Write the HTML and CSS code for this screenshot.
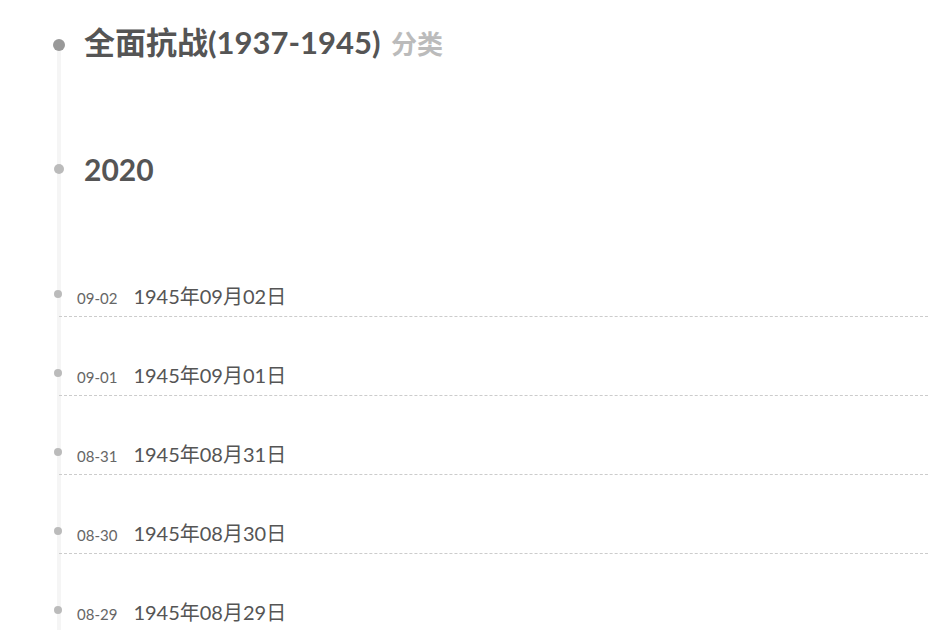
FILE: index.html
```html
<!DOCTYPE html>
<html lang="zh-CN">
<head>
<meta charset="utf-8">
<title>全面抗战(1937-1945) 分类</title>
<link rel="stylesheet" href="styles.css">
</head>
<body>
<div class="posts-collapse">
  <div class="collection-title">
    <h1>全面抗战(1937-1945) <small>分类</small></h1>
  </div>
  <div class="collection-year">
    <h2>2020</h2>
  </div>
  <article class="post">
    <time>09-02</time><a class="post-title" href="#">1945年09月02日</a>
  </article>
  <article class="post">
    <time>09-01</time><a class="post-title" href="#">1945年09月01日</a>
  </article>
  <article class="post">
    <time>08-31</time><a class="post-title" href="#">1945年08月31日</a>
  </article>
  <article class="post">
    <time>08-30</time><a class="post-title" href="#">1945年08月30日</a>
  </article>
  <article class="post">
    <time>08-29</time><a class="post-title" href="#">1945年08月29日</a>
  </article>
</div>
</body>
</html>
```

FILE: styles.css
```css
html, body {
  margin: 0;
  padding: 0;
  background: #fff;
}

body {
  font-family: Lato, "Noto Sans CJK SC", sans-serif;
  color: #555;
  overflow: hidden;
}

.posts-collapse {
  position: relative;
  margin-left: 59px;
  padding-top: 21px;
}

/* vertical timeline rail */
.posts-collapse::before {
  content: "";
  position: absolute;
  left: -2px;
  top: 50px;
  bottom: 0;
  width: 4px;
  background: #f5f5f5;
}

.collection-title,
.collection-year {
  position: relative;
  padding-left: 25px;
}

.collection-title h1 {
  margin: 0;
  font-size: 31px;
  font-weight: 700;
  line-height: 42px;
  color: #555;
}

.collection-title small {
  margin-left: 3px;
  font-size: 26px;
  color: #bbb;
}

.collection-title::before {
  content: "";
  position: absolute;
  left: -6px;
  top: 18px;
  width: 12px;
  height: 12px;
  border-radius: 50%;
  background: #999;
  z-index: 1;
}

.collection-year {
  margin-top: 83px;
}

.collection-year h2 {
  margin: 0;
  font-size: 30px;
  font-weight: 700;
  line-height: 42px;
  color: #555;
}

.collection-year::before {
  content: "";
  position: absolute;
  left: -5px;
  top: 16px;
  width: 10px;
  height: 10px;
  border-radius: 50%;
  background: #bbb;
  z-index: 1;
}

.collection-year + .post {
  margin-top: 92px;
}

.post {
  position: relative;
  display: flex;
  align-items: baseline;
  gap: 16px;
  padding-left: 18px;
  height: 35px;
  line-height: 28px;
  margin-bottom: 44px;
  border-bottom: 1px dashed #ccc;
  box-sizing: border-box;
}

.post::before {
  content: "";
  position: absolute;
  left: -5px;
  top: 8px;
  width: 8px;
  height: 8px;
  border-radius: 50%;
  background: #bbb;
  z-index: 1;
}

.post time {
  font-size: 15px;
  color: #666;
}

.post-title {
  font-size: 20px;
  color: #555;
  text-decoration: none;
}
```
